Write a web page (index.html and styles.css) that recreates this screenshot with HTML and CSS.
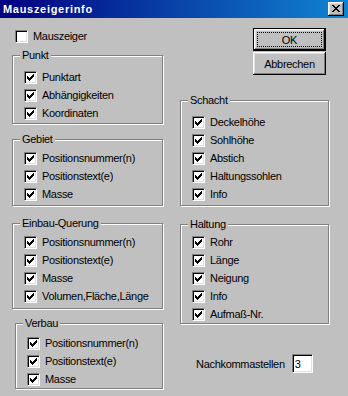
FILE: index.html
```html
<!DOCTYPE html>
<html lang="de">
<head>
    <meta charset="UTF-8">
    <meta name="viewport" content="width=device-width, initial-scale=1.0">
    <title>Mauszeigerinfo</title>
    <link rel="stylesheet" href="styles.css">
</head>
<body>

    <!-- Häkchen einmal definieren, dann per <use> einsetzen -->
    <svg class="defs" width="0" height="0" aria-hidden="true">
        <symbol id="chk" viewBox="0 0 7 7">
            <path d="M0 2h1v3H0z M1 3h1v3H1z M2 4h1v3H2z M3 3h1v3H3z M4 2h1v3H4z M5 1h1v3H5z M6 0h1v3H6z"/>
        </symbol>
    </svg>

    <div class="window">
        <div class="titlebar">
            <span class="title">Mauszeigerinfo</span>
            <button class="close-btn" aria-label="Schließen">
                <svg width="8" height="7" viewBox="0 0 8 7"><path d="M0 0h2v1H0z M6 0h2v1H6z M1 1h2v1H1z M5 1h2v1H5z M2 2h4v1H2z M3 3h2v1H3z M2 4h4v1H2z M1 5h2v1H1z M5 5h2v1H5z M0 6h2v1H0z M6 6h2v1H6z"/></svg>
            </button>
        </div>

        <div class="dialog">
            <div class="col-left">
                <label class="check check-main"><span class="box"></span><span>Mauszeiger</span></label>

                <fieldset class="group group-punkt">
                    <legend>Punkt</legend>
                    <label class="check"><span class="box"><svg><use href="#chk"/></svg></span><span>Punktart</span></label>
                    <label class="check"><span class="box"><svg><use href="#chk"/></svg></span><span>Abhängigkeiten</span></label>
                    <label class="check"><span class="box"><svg><use href="#chk"/></svg></span><span>Koordinaten</span></label>
                </fieldset>

                <fieldset class="group group-gebiet">
                    <legend>Gebiet</legend>
                    <label class="check"><span class="box"><svg><use href="#chk"/></svg></span><span>Positionsnummer(n)</span></label>
                    <label class="check"><span class="box"><svg><use href="#chk"/></svg></span><span>Positionstext(e)</span></label>
                    <label class="check"><span class="box"><svg><use href="#chk"/></svg></span><span>Masse</span></label>
                </fieldset>

                <fieldset class="group group-einbau">
                    <legend>Einbau-Querung</legend>
                    <label class="check"><span class="box"><svg><use href="#chk"/></svg></span><span>Positionsnummer(n)</span></label>
                    <label class="check"><span class="box"><svg><use href="#chk"/></svg></span><span>Positionstext(e)</span></label>
                    <label class="check"><span class="box"><svg><use href="#chk"/></svg></span><span>Masse</span></label>
                    <label class="check"><span class="box"><svg><use href="#chk"/></svg></span><span>Volumen,Fläche,Länge</span></label>
                </fieldset>

                <fieldset class="group group-verbau">
                    <legend>Verbau</legend>
                    <label class="check"><span class="box"><svg><use href="#chk"/></svg></span><span>Positionsnummer(n)</span></label>
                    <label class="check"><span class="box"><svg><use href="#chk"/></svg></span><span>Positionstext(e)</span></label>
                    <label class="check"><span class="box"><svg><use href="#chk"/></svg></span><span>Masse</span></label>
                </fieldset>
            </div>

            <div class="col-right">
                <div class="buttons">
                    <button class="btn btn-default">OK</button>
                    <button class="btn">Abbrechen</button>
                </div>

                <fieldset class="group group-schacht">
                    <legend>Schacht</legend>
                    <label class="check"><span class="box"><svg><use href="#chk"/></svg></span><span>Deckelhöhe</span></label>
                    <label class="check"><span class="box"><svg><use href="#chk"/></svg></span><span>Sohlhöhe</span></label>
                    <label class="check"><span class="box"><svg><use href="#chk"/></svg></span><span>Abstich</span></label>
                    <label class="check"><span class="box"><svg><use href="#chk"/></svg></span><span>Haltungssohlen</span></label>
                    <label class="check"><span class="box"><svg><use href="#chk"/></svg></span><span>Info</span></label>
                </fieldset>

                <fieldset class="group group-haltung">
                    <legend>Haltung</legend>
                    <label class="check"><span class="box"><svg><use href="#chk"/></svg></span><span>Rohr</span></label>
                    <label class="check"><span class="box"><svg><use href="#chk"/></svg></span><span>Länge</span></label>
                    <label class="check"><span class="box"><svg><use href="#chk"/></svg></span><span>Neigung</span></label>
                    <label class="check"><span class="box"><svg><use href="#chk"/></svg></span><span>Info</span></label>
                    <label class="check"><span class="box"><svg><use href="#chk"/></svg></span><span>Aufmaß-Nr.</span></label>
                </fieldset>

                <div class="decimals">
                    <span>Nachkommastellen</span>
                    <input type="text" class="field" value="3">
                </div>
            </div>
        </div>
    </div>

</body>
</html>
```

FILE: styles.css
```css
/* Grundlayout im Stil eines alten Windows-Dialogs */
body {
    margin: 0;
    background: #c0c0c0;
    font-family: "Liberation Sans", Arial, sans-serif;
    font-size: 11px;
    color: #000;
}

.defs {
    position: absolute;
    width: 0;
    height: 0;
}

.window {
    width: 348px;
    height: 396px;
    overflow: hidden;
}

/* Titelleiste */
.titlebar {
    height: 18px;
    display: flex;
    align-items: center;
    background: linear-gradient(to right, #000080, #1084d0);
    color: #fff;
}

.title {
    flex: 1;
    padding-left: 3px;
    font-weight: bold;
    letter-spacing: 0.7px;
}

.close-btn {
    width: 16px;
    height: 14px;
    margin-right: 4px;
    padding: 0;
    border: none;
    background: #c0c0c0;
    box-shadow: inset -1px -1px #000, inset 1px 1px #fff, inset -2px -2px #808080, inset 2px 2px #dfdfdf;
    display: flex;
    align-items: center;
    justify-content: center;
}

.close-btn svg {
    display: block;
    margin: 0 1px 1px 0;
}

/* Dialoginhalt */
.dialog {
    display: flex;
    padding: 10px 0 0 12px;
}

.col-left {
    width: 151px;
    display: flex;
    flex-direction: column;
}

.col-right {
    width: 149px;
    margin-left: 17px;
    display: flex;
    flex-direction: column;
}

/* Gruppenrahmen (geätzte Linie) */
.group {
    margin: 0;
    padding: 7px 4px 4px 11px;
    border: 1px solid #808080;
    box-shadow: 1px 1px 0 #fff, inset 1px 1px 0 #fff;
    display: flex;
    flex-direction: column;
    gap: 5px;
    min-width: 0;
}

.group legend {
    margin-left: -4px;
    padding: 0 2px;
    line-height: 13px;
    background: #c0c0c0;
    letter-spacing: -0.3px;
}

.group-punkt {
    margin-top: 6px;
    padding-top: 9px;
    padding-bottom: 3px;
}

.group-gebiet {
    margin-top: 9px;
    padding-top: 6px;
}

.group-einbau {
    margin-top: 11px;
    padding-top: 6px;
    padding-bottom: 5px;
}

.group-verbau {
    margin: 8px 0 0 3px;
    padding-bottom: 2px;
}

.group-schacht {
    margin-top: 19px;
    padding-top: 9px;
}

.group-haltung {
    margin-top: 12px;
    padding-top: 5px;
    padding-bottom: 2px;
}

/* Kontrollkästchen */
.check {
    display: flex;
    align-items: flex-start;
    height: 13px;
    letter-spacing: -0.3px;
}

.check-main {
    margin: 2px 0 0 3px;
}

.check span:last-child {
    line-height: 12px;
}

.box {
    width: 13px;
    height: 13px;
    box-sizing: border-box;
    flex: none;
    margin-right: 5px;
    padding: 2px;
    background: #fff;
    border: 1px solid;
    border-color: #808080 #fff #fff #808080;
    box-shadow: inset 1px 1px #000, inset -1px -1px #dfdfdf;
}

.box svg {
    display: block;
    width: 7px;
    height: 7px;
}

/* Schaltflächen */
.buttons {
    display: flex;
    flex-direction: column;
    align-items: flex-end;
    gap: 1px;
    padding-right: 3px;
}

.btn {
    width: 73px;
    height: 23px;
    box-sizing: border-box;
    padding: 0;
    border: none;
    background: #c0c0c0;
    font: inherit;
    letter-spacing: -0.3px;
    color: #000;
    box-shadow: inset -1px -1px #000, inset 1px 1px #fff, inset -2px -2px #808080, inset 2px 2px #dfdfdf;
}

.btn-default {
    border: 1px solid #000;
    outline: 1px dotted #000;
    outline-offset: -5px;
}

/* Nachkommastellen */
.decimals {
    display: flex;
    align-items: center;
    gap: 7px;
    margin-top: 30px;
    padding-left: 16px;
    letter-spacing: -0.3px;
}

.field {
    width: 21px;
    height: 19px;
    box-sizing: border-box;
    padding: 0 0 0 2px;
    background: #fff;
    border: 1px solid;
    border-color: #808080 #fff #fff #808080;
    box-shadow: inset 1px 1px #000, inset -1px -1px #dfdfdf;
    font: inherit;
    outline: none;
}
```
